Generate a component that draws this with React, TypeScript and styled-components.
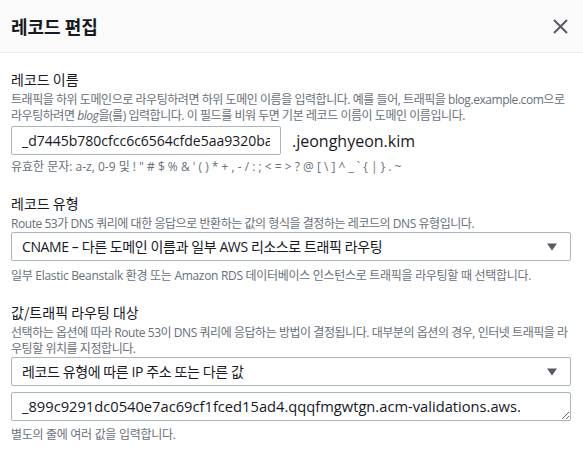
import React from "react";
import styled, { createGlobalStyle } from "styled-components";

const Global = createGlobalStyle`
  html, body { margin: 0; padding: 0; background: #ffffff; }
  body { font-family: "Open Sans", "Noto Sans CJK KR", sans-serif; color: #16191f; }
  * { box-sizing: border-box; }
`;

const Modal = styled.div`
  width: 583px;
  height: 453px;
  overflow: hidden;
  background: #ffffff;
`;

const Header = styled.div`
  height: 53px;
  background: #fafafa;
  border-bottom: 1px solid #eaeded;
  display: flex;
  align-items: center;
  justify-content: space-between;
  padding: 0 15px 0 11px;
`;

const Title = styled.h2`
  margin: 0;
  font-size: 18px;
  font-weight: 700;
  line-height: 22px;
  color: #16191f;
  font-family: "Noto Sans CJK KR", sans-serif;
`;

const CloseButton = styled.button`
  border: none;
  background: transparent;
  padding: 0;
  width: 15px;
  height: 15px;
  display: flex;
  align-items: center;
  justify-content: center;
  cursor: pointer;
`;

const Body = styled.div`
  padding: 17px 10px 0 11px;
  display: flex;
  flex-direction: column;
  gap: 19px;
`;

const Field = styled.div`
  display: flex;
  flex-direction: column;
`;

const Label = styled.div`
  font-size: 14px;
  line-height: 18px;
  color: #16191f;
  font-family: "Noto Sans CJK KR", sans-serif;
`;

const Desc = styled.div`
  font-size: 12px;
  line-height: 16px;
  color: #687078;
  margin-top: 4px;
  letter-spacing: -0.45px;
`;

const Hint = styled.div<{ $spacing?: number; $mt?: number }>`
  font-size: 12px;
  line-height: 16px;
  color: #687078;
  margin-top: ${(p) => p.$mt ?? 6}px;
  letter-spacing: ${(p) => p.$spacing ?? -0.3}px;
`;

const Row = styled.div`
  display: flex;
  align-items: center;
  margin-top: 2px;
`;

const boxStyles = `
  height: 29px;
  border: 1px solid #aab7b8;
  border-radius: 2px;
  background: #ffffff;
  font-family: "Open Sans", "Noto Sans CJK KR", sans-serif;
  color: #16191f;
  padding: 0 10px;
`;

const TextInput = styled.input`
  ${boxStyles}
  font-size: 14px;
  width: 270px;
  outline: none;
`;

const Suffix = styled.span`
  font-size: 16px;
  line-height: 20px;
  color: #16191f;
  margin-left: 11px;
`;

const Select = styled.div`
  ${boxStyles}
  width: 560px;
  flex: none;
  margin-top: 0;
  display: flex;
  align-items: center;
  justify-content: space-between;
  padding-right: 13px;
  font-size: 14px;
  letter-spacing: -0.4px;
`;

const SelectText = styled.span`
  line-height: 20px;
`;

const TextArea = styled.textarea`
  ${boxStyles}
  width: 560px;
  margin-top: 6px;
  padding: 3px 10px;
  font-size: 14.7px;
  line-height: 21px;
  resize: vertical;
  outline: none;
  overflow: hidden;
  display: block;
`;

const Caret = () => (
  <svg width="10" height="8" viewBox="0 0 10 8">
    <path d="M0 0.5 H10 L5 7.5 Z" fill="#545b64" />
  </svg>
);

export default function App() {
  return (
    <Modal>
      <Global />
      <Header>
        <Title>레코드 편집</Title>
        <CloseButton aria-label="닫기">
          <svg width="15" height="15" viewBox="0 0 15 15">
            <path d="M1 1 L14 14 M14 1 L1 14" stroke="#545b64" strokeWidth="2" fill="none" />
          </svg>
        </CloseButton>
      </Header>
      <Body>
        <Field>
          <Label>레코드 이름</Label>
          <Desc>
            트래픽을 하위 도메인으로 라우팅하려면 하위 도메인 이름을 입력합니다. 예를 들어, 트래픽을 blog.example.com으로
            라우팅하려면 <i>blog</i>을(를) 입력합니다. 이 필드를 비워 두면 기본 레코드 이름이 도메인 이름입니다.
          </Desc>
          <Row>
            <TextInput defaultValue="_d7445b780cfcc6c6564cfde5aa9320ba" />
            <Suffix>.jeonghyeon.kim</Suffix>
          </Row>
          <Hint $spacing={0} $mt={4}>
            유효한 문자: a-z, 0-9 및 ! " # $ % &amp; ' ( ) * + , - / : ; &lt; = &gt; ? @ [ \ ] ^ _ ` {"{"} | {"}"} . ~
          </Hint>
        </Field>
        <Field>
          <Label>레코드 유형</Label>
          <Desc>Route 53가 DNS 쿼리에 대한 응답으로 반환하는 값의 형식을 결정하는 레코드의 DNS 유형입니다.</Desc>
          <Select>
            <SelectText>CNAME – 다른 도메인 이름과 일부 AWS 리소스로 트래픽 라우팅</SelectText>
            <Caret />
          </Select>
          <Hint $mt={7}>일부 Elastic Beanstalk 환경 또는 Amazon RDS 데이터베이스 인스턴스로 트래픽을 라우팅할 때 선택합니다.</Hint>
        </Field>
        <Field>
          <Label>값/트래픽 라우팅 대상</Label>
          <Desc>
            선택하는 옵션에 따라 Route 53이 DNS 쿼리에 응답하는 방법이 결정됩니다. 대부분의 옵션의 경우, 인터넷 트래픽을 라우팅할 위치를 지정합니다.
          </Desc>
          <Select>
            <SelectText>레코드 유형에 따른 IP 주소 또는 다른 값</SelectText>
            <Caret />
          </Select>
          <TextArea rows={1} defaultValue="_899c9291dc0540e7ac69cf1fced15ad4.qqqfmgwtgn.acm-validations.aws." />
          <Hint>별도의 줄에 여러 값을 입력합니다.</Hint>
        </Field>
      </Body>
    </Modal>
  );
}
